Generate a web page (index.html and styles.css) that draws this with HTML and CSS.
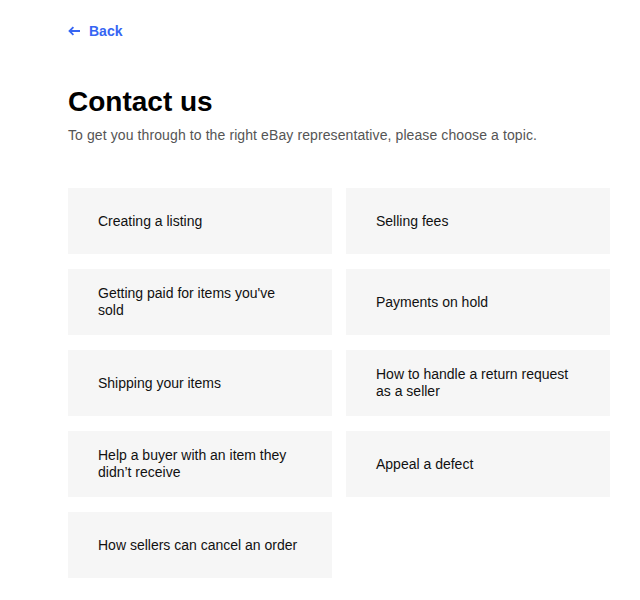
FILE: index.html
```html
<!DOCTYPE html>
<html lang="en">
<head>
<meta charset="utf-8">
<title>Contact us</title>
<link rel="stylesheet" href="styles.css">
</head>
<body>
<main class="page">
  <a class="back" href="#">
    <svg class="back-icon" width="12" height="10" viewBox="0 0 12 10" aria-hidden="true">
      <path d="M12 5H1.6M5.4 1.1L1.5 5l3.9 3.9" fill="none" stroke="currentColor" stroke-width="1.8"/>
    </svg>
    <span>Back</span>
  </a>
  <h1 class="title">Contact us</h1>
  <p class="subtitle">To get you through to the right eBay representative, please choose a topic.</p>
  <div class="topics">
    <a class="topic" href="#">Creating a listing</a>
    <a class="topic" href="#">Selling fees</a>
    <a class="topic" href="#">Getting paid for items you've sold</a>
    <a class="topic" href="#">Payments on hold</a>
    <a class="topic" href="#">Shipping your items</a>
    <a class="topic" href="#">How to handle a return request as a seller</a>
    <a class="topic" href="#">Help a buyer with an item they didn’t receive</a>
    <a class="topic" href="#">Appeal a defect</a>
    <a class="topic" href="#">How sellers can cancel an order</a>
  </div>
</main>
</body>
</html>
```

FILE: styles.css
```css
* { box-sizing: border-box; }
html, body { margin: 0; padding: 0; background: #fff; }
body {
  font-family: "Liberation Sans", Arial, Helvetica, sans-serif;
  color: #111;
}
.page {
  padding: 21px 0 0 68px;
  width: 610px;
}
.back {
  display: flex;
  align-items: center;
  gap: 9px;
  height: 20px;
  color: #3665f3;
  font-weight: bold;
  font-size: 14px;
  line-height: 20px;
  text-decoration: none;
}
.back-icon { display: block; }
.title {
  margin: 44px 0 0;
  font-size: 28px;
  line-height: 34px;
  font-weight: bold;
  color: #000;
}
.subtitle {
  margin: 6px 0 0;
  font-size: 14px;
  line-height: 20px;
  letter-spacing: 0.1px;
  color: #555;
}
.topics {
  margin-top: 43px;
  display: grid;
  grid-template-columns: 264px 264px;
  column-gap: 14px;
  row-gap: 15px;
}
.topic {
  display: flex;
  align-items: center;
  height: 66px;
  padding: 0 30px;
  background: #f6f6f6;
  color: #111;
  font-size: 14px;
  line-height: 17px;
  text-decoration: none;
}
```
